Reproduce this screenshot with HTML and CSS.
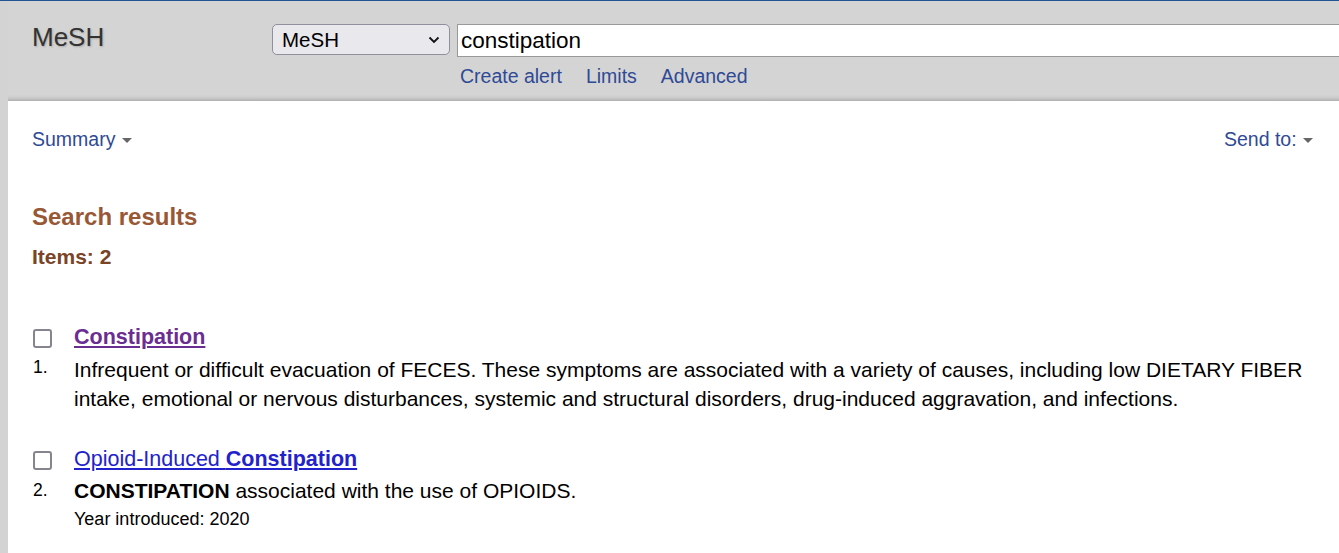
FILE: index.html
```html
<!DOCTYPE html>
<html>
<head>
<meta charset="UTF-8">
<title>constipation - MeSH</title>
<link rel="stylesheet" href="styles.css">
</head>
<body>

	<div class="page">
		<!-- 검색 헤더 -->
		<div class="header">
			<div class="dbTitle">MeSH</div>
			<form class="searchBar">
				<div class="selectWrap">
					<select id="database" class="dbSelect">
						<option value="mesh" selected="selected">MeSH</option>
						<option value="pubmed">PubMed</option>
					</select>
					<svg class="chevron" width="12" height="8" viewBox="0 0 12 8">
						<path d="M1.5 1.5 L6 6 L10.5 1.5" fill="none" stroke="#111" stroke-width="1.8"/>
					</svg>
				</div>
				<input type="text" id="term" class="searchTerm" value="constipation">
				<div class="searchLinks">
					<a href="#">Create alert</a>
					<a href="#">Limits</a>
					<a href="#">Advanced</a>
				</div>
			</form>
		</div>

		<div class="content">
			<div class="toolbar">
				<a href="#" class="dropLink">Summary <span class="tri"></span></a>
				<a href="#" class="dropLink">Send to: <span class="tri"></span></a>
			</div>

			<h2 class="resultTitle">Search results</h2>
			<div class="itemCount">Items: 2</div>

			<div class="rslt">
				<span class="chk"></span>
				<a href="#" class="title visited">Constipation</a>
				<span class="num">1.</span>
				<div class="desc">Infrequent or difficult evacuation of FECES. These symptoms are associated with a variety of causes, including low DIETARY FIBER intake, emotional or nervous disturbances, systemic and structural disorders, drug-induced aggravation, and infections.</div>
			</div>

			<div class="rslt">
				<span class="chk"></span>
				<a href="#" class="title">Opioid-Induced <b>Constipation</b></a>
				<span class="num">2.</span>
				<div class="desc"><b>CONSTIPATION</b> associated with the use of OPIOIDS.
					<div class="year">Year introduced: 2020</div>
				</div>
			</div>
		</div>
	</div>

</body>
</html>
```

FILE: styles.css
```css
html, body {
	margin: 0;
	padding: 0;
	overflow: hidden;
}

body {
	background-color: #d3d3d3;
	border-top: 1px solid #205493;
	font-family: "Liberation Sans", Arial, sans-serif;
	color: #000;
}

a {
	color: #2f4a95;
	text-decoration: none;
}

.page {
	margin-left: 8px;
	min-height: 560px;
	background-color: #fff;
}

/* header */
.header {
	display: flex;
	height: 100px;
	padding-left: 24px;
	background: linear-gradient(to bottom, #d4d4d4 0, #d4d4d4 94px, #c9c9c9 97px, #b0b0b0 100px);
	box-sizing: border-box;
	overflow: hidden;
}

.dbTitle {
	flex-shrink: 0;
	width: 240px;
	padding-top: 21px;
	font-size: 26px;
	color: #333;
	text-shadow: 1px 1px 2px #aaa;
}

.searchBar {
	flex-shrink: 0;
	display: grid;
	grid-template-columns: 178px 1100px;
	column-gap: 7px;
	align-items: start;
	margin: 23px 0 0 0;
}

.selectWrap {
	position: relative;
	height: 31px;
}

.dbSelect {
	-webkit-appearance: none;
	appearance: none;
	width: 178px;
	height: 31px;
	padding: 0 9px;
	font-family: "Liberation Sans", Arial, sans-serif;
	font-size: 20.5px;
	color: #000;
	background-color: #e9e9ed;
	border: 1px solid #8f8f9d;
	border-radius: 5px;
	outline: none;
}

.chevron {
	position: absolute;
	right: 10px;
	top: 12px;
	pointer-events: none;
}

.searchTerm {
	height: 33px;
	padding: 0 3px;
	box-sizing: border-box;
	font-family: "Liberation Sans", Arial, sans-serif;
	font-size: 22.5px;
	border: 1px solid #999;
	outline: none;
}

.searchLinks {
	grid-column: 2;
	display: flex;
	gap: 24px;
	margin-top: -5px;
	padding-left: 3px;
	font-size: 19.5px;
}

/* content */
.content {
	padding: 27px 26px 0 24px;
}

.toolbar {
	display: flex;
	justify-content: space-between;
	font-size: 19.5px;
}

.tri {
	display: inline-block;
	width: 0;
	height: 0;
	margin-left: 1px;
	vertical-align: 3px;
	border-left: 5px solid transparent;
	border-right: 5px solid transparent;
	border-top: 5px solid #666;
}

.resultTitle {
	margin: 52px 0 0 0;
	font-size: 24px;
	color: #985735;
}

.itemCount {
	margin-top: 14px;
	font-size: 21px;
	font-weight: bold;
	color: #7a4426;
}

.rslt {
	display: grid;
	grid-template-columns: 42px 1fr;
	margin-top: 56px;
}

.rslt + .rslt {
	margin-top: 34px;
}

.chk {
	width: 19px;
	height: 19px;
	margin: 4px 0 0 1px;
	box-sizing: border-box;
	border: 2px solid #85858f;
	border-radius: 3px;
}

.title {
	font-size: 21.5px;
	color: #2222cc;
	text-decoration: underline;
}

.title.visited {
	font-weight: bold;
	color: #6a2d91;
}

.num {
	margin: 7px 0 0 1px;
	font-size: 17.5px;
}

.rslt + .rslt .num {
	margin-top: 8px;
}

.desc {
	margin-top: 5px;
	font-size: 21px;
	line-height: 29px;
}

.rslt + .rslt .desc {
	margin-top: 4px;
}

.year {
	margin-top: 4px;
	font-size: 18px;
	line-height: 20px;
}
```
